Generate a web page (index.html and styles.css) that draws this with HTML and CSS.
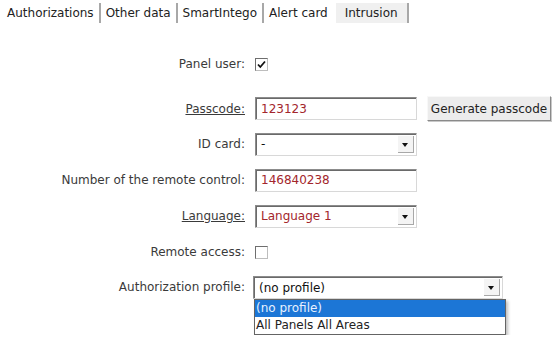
FILE: index.html
```html
<!DOCTYPE html>
<html lang="en">
<head>
    <meta charset="UTF-8">
    <title>Intrusion</title>
    <link rel="stylesheet" href="styles.css">
</head>
<body>
    <div class="tabs">
        <span class="tab">Authorizations</span>
        <span class="tab">Other data</span>
        <span class="tab">SmartIntego</span>
        <span class="tab plain">Alert card</span>
        <span class="tab active">Intrusion</span>
    </div>

    <div class="form">
        <div class="row first">
            <label class="lbl">Panel user:</label>
            <span class="check checked">
                <svg width="11" height="11" viewBox="0 0 11 11"><path d="M2 5.5 L4.3 8 L9 2.5" fill="none" stroke="#111" stroke-width="1.8"/></svg>
            </span>
        </div>

        <div class="row">
            <label class="lbl req">Passcode:</label>
            <div class="inline">
                <span class="field value">123123</span>
                <span class="btn">Generate passcode</span>
            </div>
        </div>

        <div class="row">
            <label class="lbl">ID card:</label>
            <span class="field combo">-<span class="arrow"></span></span>
        </div>

        <div class="row">
            <label class="lbl">Number of the remote control:</label>
            <span class="field value">146840238</span>
        </div>

        <div class="row">
            <label class="lbl req">Language:</label>
            <span class="field combo value">Language 1<span class="arrow"></span></span>
        </div>

        <div class="row">
            <label class="lbl">Remote access:</label>
            <span class="check"></span>
        </div>

        <div class="row open">
            <label class="lbl">Authorization profile:</label>
            <div class="drop">
                <span class="field combo wide">(no profile)<span class="arrow"></span></span>
                <div class="list">
                    <div class="opt sel">(no profile)</div>
                    <div class="opt">All Panels All Areas</div>
                </div>
            </div>
        </div>
    </div>
</body>
</html>
```

FILE: styles.css
```css
body {
    margin: 0;
    background-color: #fff;
    font-family: 'DejaVu Sans', Tahoma, sans-serif;
    font-size: 12px;
    color: #333;
}
.tabs {
    display: flex;
    height: 24px;
    padding: 3px 0 0 2px;
    box-sizing: border-box;
}
.tab {
    display: flex;
    align-items: center;
    padding: 0 5px;
    height: 20px;
    border-right: 2px solid #a8a8a8;
    color: #222;
}
.tab.plain {
    border-right: none;
}
.tab.active {
    background-color: #f0f0f0;
    padding: 0 9px 0 9px;
    margin-left: 3px;
}
.form {
    padding-top: 28px;
    display: flex;
    flex-direction: column;
    gap: 12px;
}
.row {
    display: grid;
    grid-template-columns: 245px auto;
    column-gap: 10px;
    align-items: center;
    height: 24px;
}
.row.first {
    margin-bottom: 8px;
}
.row.open {
    height: auto;
    align-items: start;
    column-gap: 8px;
}
.row.open .lbl {
    line-height: 23px;
}
.lbl {
    text-align: right;
    color: #3a3a3a;
}
.lbl.req {
    text-decoration: underline;
}
.inline {
    display: flex;
    align-items: center;
    gap: 10px;
}
.check {
    width: 13px;
    height: 13px;
    box-sizing: border-box;
    border: 1px solid;
    border-color: #6e6e6e #bdbdbd #bdbdbd #6e6e6e;
    background-color: #fff;
    display: flex;
    align-items: center;
    justify-content: center;
}
.field {
    position: relative;
    display: flex;
    align-items: center;
    width: 162px;
    height: 23px;
    box-sizing: border-box;
    padding-left: 5px;
    border: 1px solid;
    border-color: #8c8c8c #d8d8d8 #d8d8d8 #8c8c8c;
    box-shadow: inset 1px 1px 0 #6a6a6a;
    background-color: #fff;
    color: #111;
}
.value {
    color: #a3262c;
}
.field.wide {
    width: 250px;
}
.arrow {
    position: absolute;
    right: 2px;
    top: 2px;
    width: 16px;
    height: 17px;
    background-color: #f4f4f4;
    border-right: 1px solid #a8a8a8;
    border-bottom: 1px solid #a8a8a8;
    box-sizing: border-box;
}
.arrow::after {
    content: "";
    position: absolute;
    left: 4px;
    top: 7px;
    border-left: 3.5px solid transparent;
    border-right: 3.5px solid transparent;
    border-top: 4px solid #111;
}
.btn {
    display: flex;
    align-items: center;
    justify-content: center;
    width: 124px;
    height: 25px;
    box-sizing: border-box;
    background-color: #ececec;
    border: 1px solid;
    border-color: #f8f8f8 #8a8a8a #8a8a8a #f8f8f8;
    box-shadow: 1px 1px 0 #c8c8c8;
    color: #222;
}
.drop {
    display: flex;
    flex-direction: column;
}
.list {
    width: 252px;
    margin-left: 1px;
    background-color: #fff;
    border: 1px solid #646464;
    box-shadow: 2px 2px 3px rgba(0, 0, 0, 0.25);
    box-sizing: border-box;
    color: #222;
}
.opt {
    height: 17px;
    line-height: 17px;
    padding-left: 1px;
}
.opt.sel {
    background-color: #1c76d6;
    color: #e8f1ff;
}
```
